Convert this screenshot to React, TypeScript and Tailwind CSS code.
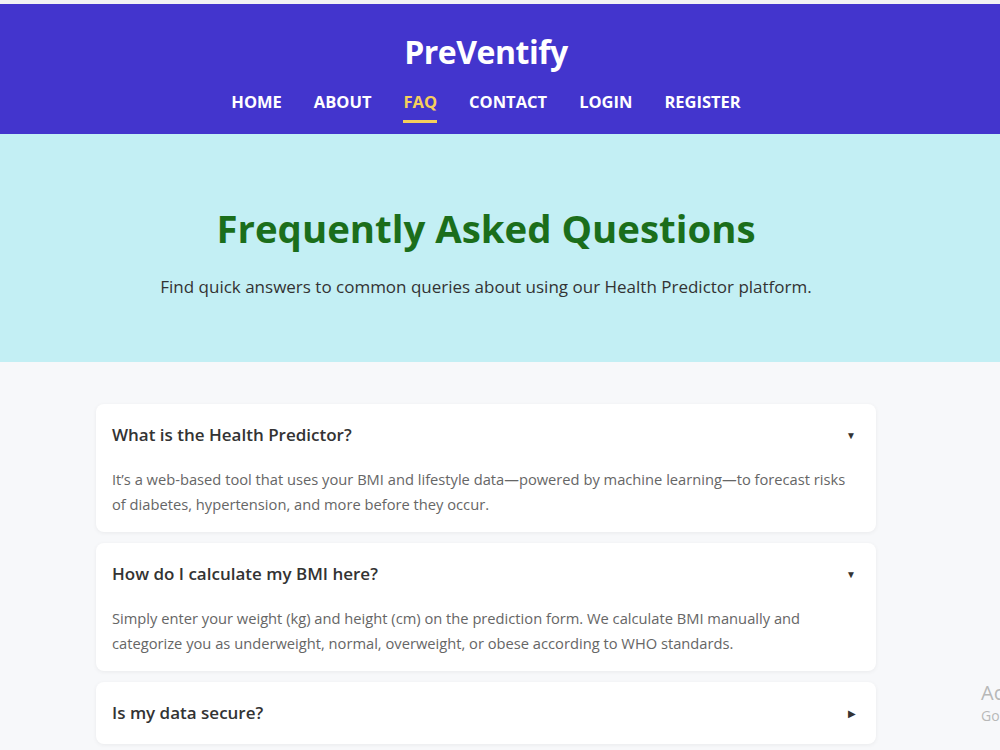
import { useState } from "react";

type Faq = { q: string; a: string };

const faqs: Faq[] = [
    {
        q: "What is the Health Predictor?",
        a: "It\u2019s a web-based tool that uses your BMI and lifestyle data\u2014powered by machine learning\u2014to forecast risks of diabetes, hypertension, and more before they occur.",
    },
    {
        q: "How do I calculate my BMI here?",
        a: "Simply enter your weight (kg) and height (cm) on the prediction form. We calculate BMI manually and categorize you as underweight, normal, overweight, or obese according to WHO standards.",
    },
    {
        q: "Is my data secure?",
        a: "Yes. Your information is stored securely and is never shared with third parties.",
    },
];

const links = ["Home", "About", "FAQ", "Contact", "Login", "Register"];

const FaqItem = ({ item, open, onToggle }: { item: Faq; open: boolean; onToggle: () => void }) => (
    <div className="bg-white rounded-lg shadow-[0_1px_4px_rgba(0,0,0,0.06)]">
        <button
            onClick={onToggle}
            className="w-full flex items-center justify-between px-4 h-[62px] text-left"
        >
            <span className="text-[17px] font-semibold text-[#333]">{item.q}</span>
            <span className="text-[10px] text-[#333] pr-[4px]">{open ? "\u25BC" : "\u25B6"}</span>
        </button>
        {open && (
            <p className="px-4 pb-[15px] mt-[1px] text-[14.7px] leading-[25px] text-[#666]">{item.a}</p>
        )}
    </div>
);

export default function App() {
    const [open, setOpen] = useState<number[]>([0, 1]);

    const toggle = (i: number) =>
        setOpen((prev) => (prev.includes(i) ? prev.filter((x) => x !== i) : [...prev, i]));

    return (
        <div className="relative min-h-[750px] bg-[#f7f8fa] font-['Open_Sans',sans-serif] overflow-hidden">
            <div className="h-[4px] bg-[#f2f2f4]" />
            <header className="bg-[#4335cd] h-[130px] pr-[28px] flex flex-col items-center">
                <h1 className="mt-[28px] text-[32px] leading-[40px] font-bold text-white tracking-[-0.5px]">PreVentify</h1>
                <nav className="mt-[18px] flex gap-[32px]">
                    {links.map((l) => (
                        <a
                            key={l}
                            href="#"
                            className={
                                l === "FAQ"
                                    ? "text-[16.5px] font-bold uppercase text-[#f6cf5c] border-b-[3px] border-[#f6cf5c] pb-[5px]"
                                    : "text-[16.5px] font-bold uppercase text-white pb-[8px]"
                            }
                        >
                            {l}
                        </a>
                    ))}
                </nav>
            </header>

            <section className="bg-[#c3eff4] h-[228px] pr-[28px] flex flex-col items-center">
                <h2 className="mt-[69px] text-[38.4px] leading-[50px] font-bold text-[#1b6e1b]">Frequently Asked Questions</h2>
                <p className="mt-[21px] text-[17px] text-[#333]">
                    Find quick answers to common queries about using our Health Predictor platform.
                </p>
            </section>

            <div className="pr-[28px]">
                <main className="w-[780px] mx-auto mt-[42px] flex flex-col gap-[11px] pb-10">
                    {faqs.map((f, i) => (
                        <FaqItem key={f.q} item={f} open={open.includes(i)} onToggle={() => toggle(i)} />
                    ))}
                </main>
            </div>

            {/* system activation notice overlay */}
            <div className="absolute left-[981px] top-[680px] whitespace-nowrap text-[#b8b8b8]">
                <div className="text-[20px] leading-[26px]">Activate Windows</div>
                <div className="text-[14px] leading-[20px]">Go to Settings to activate Windows.</div>
            </div>
        </div>
    );
}
